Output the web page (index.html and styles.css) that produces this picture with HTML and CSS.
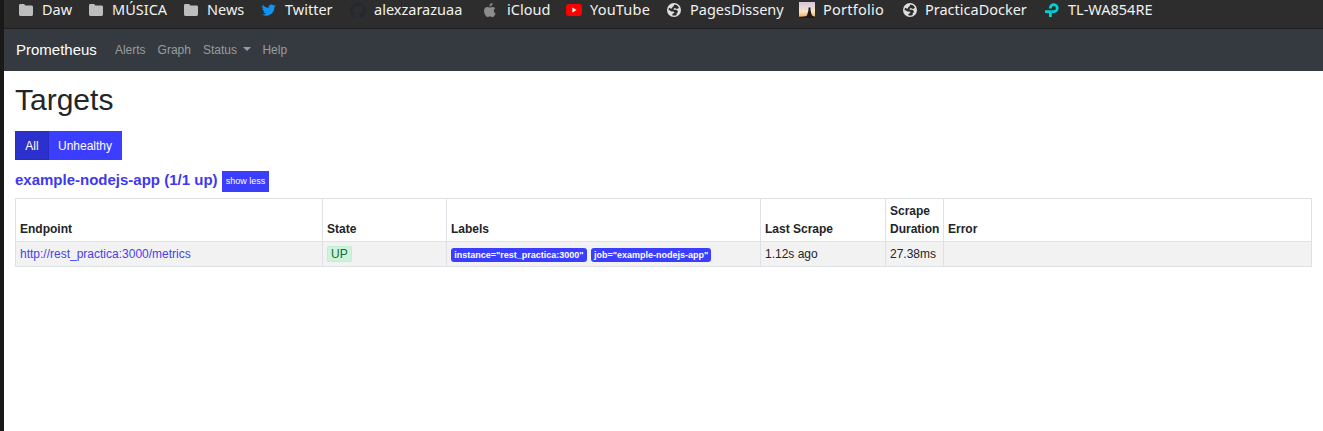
FILE: index.html
```html
<!DOCTYPE html>
<html lang="en">
<head>
<meta charset="utf-8">
<title>Prometheus Targets</title>
<link rel="stylesheet" href="styles.css">
</head>
<body>
<svg width="0" height="0" class="defs">
  <symbol id="folder" viewBox="0 0 14 12"><path fill="#bdbdbd" d="M1.4 0H5l1.5 1.6h6.1Q14 1.6 14 3v7.600Q14 12 12.600 12H1.400Q0 12 0 10.600V1.400Q0 0 1.400 0z"/></symbol>
  <symbol id="globe" viewBox="0 0 14 14"><circle cx="7" cy="7" r="7" fill="#dedede"/><path fill="#2d2d2d" d="M7.200 1.500Q10.500 1.700 12 4.500L10.800 5.700H9L8.200 4.900 6.700 5.500v1.200h2.700l1.400 1.400v1.200L9.600 10.500v1.400Q7.600 13 5.300 12.300V11.200L7.500 9.500 6.500 8.600H4.200L2.800 7.200H1.500Q1.500 5.700 2.100 4.700L3.400 5.500H4.800L5.500 3.900 6.800 3z"/></symbol>
</svg>
<div class="window">
  <nav class="bookmarks">
    <span class="bookmark"><svg class="icon folder"><use href="#folder"/></svg><span class="name">Daw</span></span>
    <span class="bookmark"><svg class="icon folder"><use href="#folder"/></svg><span class="name">MÚSICA</span></span>
    <span class="bookmark"><svg class="icon folder"><use href="#folder"/></svg><span class="name">News</span></span>
    <span class="bookmark"><svg class="icon" viewBox="0 0 24 24"><path fill="#1293f2" d="M23.600 4.900a10 10 0 0 1-2.800.8 4.900 4.900 0 0 0 2.100-2.700 10 10 0 0 1-3.100 1.200 4.900 4.900 0 0 0-8.400 4.500A14 14 0 0 1 1.300 3.500a4.900 4.900 0 0 0 1.500 6.600 5 5 0 0 1-2.200-.6 4.900 4.900 0 0 0 3.900 4.800 5 5 0 0 1-2.200.1 4.900 4.900 0 0 0 4.600 3.400A10 10 0 0 1 0 19.800a14 14 0 0 0 21.200-12.400 10 10 0 0 0 2.400-2.500z"/></svg><span class="name">Twitter</span></span>
    <span class="bookmark"><svg class="icon wide" viewBox="0 0 24 24"><path fill="#24292f" d="M12 .5a12 12 0 0 0-3.800 23.300c.6.100.8-.3.800-.6v-2.100c-3.300.7-4-1.500-4-1.500-.6-1.400-1.400-1.800-1.400-1.800-1-.7.100-.7.100-.7 1.200.1 1.900 1.200 1.900 1.200 1 1.900 2.800 1.300 3.500 1 .1-.8.400-1.300.8-1.600-2.700-.3-5.500-1.300-5.500-6 0-1.200.5-2.300 1.300-3.100-.2-.4-.6-1.600 0-3.200 0 0 1-.3 3.400 1.200a11 11 0 0 1 6 0C17.400 5 18.400 5.300 18.400 5.300c.6 1.600.2 2.900.1 3.200.8.800 1.200 1.900 1.200 3.200 0 4.600-2.800 5.600-5.500 5.900.5.400.9 1.100.9 2.300v3.300c0 .3.100.7.800.6A12 12 0 0 0 12 .5z"/></svg><span class="name">alexzarazuaa</span></span>
    <span class="bookmark"><svg class="icon apple" viewBox="0 0 24 28"><path fill="#8c8c8c" d="M17 0q.3 3-1.700 5T11 6.800q-.2-2.500 1.600-4.600T17 0zM22.500 10.500q-3 1.700-3 5 0 4 3.700 5.500-1 2.700-2.600 4.800T17 28q-1.300 0-2.600-.7t-2.600-.6q-1.200 0-2.500.6t-2.200.7q-2.300 0-4.700-4T0 15.700q0-3.500 1.900-5.700T6.500 7.800q1.500 0 3 .7t2.300.7q.9 0 2.700-.8t3.500-.6q3 .2 4.500 2.700z"/></svg><span class="name">iCloud</span></span>
    <span class="bookmark"><svg class="icon tube" viewBox="0 0 16 12"><rect width="16" height="12" rx="3" fill="#f00"/><path d="M6.400 3.600v4.800L10.500 6z" fill="#fff"/></svg><span class="name youtube">YouTube</span></span>
    <span class="bookmark"><svg class="icon"><use href="#globe"/></svg><span class="name">PagesDisseny</span></span>
    <span class="bookmark"><svg class="icon wide" viewBox="0 0 16 16"><defs><linearGradient id="sunset" x2="0" y2="1"><stop stop-color="#d6c6dc"/><stop offset=".6" stop-color="#f8e4cb"/><stop offset=".85" stop-color="#f3bd70"/><stop offset="1" stop-color="#442018"/></linearGradient></defs><path fill="url(#sunset)" d="M0 0h16v16H0z"/><path fill="#24181c" d="M0 15.200l6-.7 2-1 .7-2.500.8-3V5.500h2V8l.7 3 .8 2.500 2 1 1 .5v1H0z"/></svg><span class="name portfolio">Portfolio</span></span>
    <span class="bookmark"><svg class="icon"><use href="#globe"/></svg><span class="name docker">PracticaDocker</span></span>
    <span class="bookmark"><svg class="icon" viewBox="0 0 14 14"><path fill="none" stroke="#00d2d3" stroke-width="2.800" d="M5.300 5.600V5a3.500 3.500 0 1 1 3.700 3.700H7M0 8.700h4.200M5.400 7.300V14"/></svg><span class="name">TL-WA854RE</span></span>
  </nav>
  <header class="navbar">
    <span class="brand">Prometheus</span>
    <span class="link">Alerts</span>
    <span class="link">Graph</span>
    <span class="link status">Status</span>
    <span class="link">Help</span>
  </header>
  <main class="content">
    <h1 class="title">Targets</h1>
    <div class="filters"><button class="filter active">All</button><button class="filter">Unhealthy</button></div>
    <div class="pool"><h2 class="pool-name">example-nodejs-app (1/1 up)</h2><button class="toggle">show less</button></div>
    <table class="targets">
      <colgroup><col class="c-endpoint"><col class="c-state"><col class="c-labels"><col class="c-last"><col class="c-duration"><col></colgroup>
      <thead><tr><th>Endpoint</th><th>State</th><th>Labels</th><th>Last Scrape</th><th>Scrape Duration</th><th>Error</th></tr></thead>
      <tbody><tr>
        <td><a class="endpoint">http://rest_practica:3000/metrics</a></td>
        <td><span class="up">UP</span></td>
        <td><div class="labels"><span class="label">instance="rest_practica:3000"</span><span class="label">job="example-nodejs-app"</span></div></td>
        <td>1.12s ago</td><td>27.38ms</td><td></td>
      </tr></tbody>
    </table>
  </main>
</div>
</body>
</html>
```
FILE: styles.css
```css
* { box-sizing: border-box; }
body { margin: 0; height: 431px; overflow: hidden; background: #fff; color: #212529; font: 12px/18px "Liberation Sans", Arial, sans-serif; }
.defs { display: block; }
.window { height: 431px; border-left: 4px solid #1a1917; }
.bookmarks { display: grid; grid-template-columns: 70px 95px 78px 89px 133px 83px 100px 133px 103px 142px 120px; height: 29px; padding-left: 15px; background: #2d2d2d; border-bottom: 1px solid #1f1f1f; }
.bookmark { display: flex; align-items: center; height: 20px; color: #f1f1f1; font: 14.500px/20px "Noto Sans", sans-serif; white-space: nowrap; }
.name { padding-bottom: 2px; }
.youtube { letter-spacing: .2px; }
.portfolio { letter-spacing: .25px; }
.docker { margin-left: -1px; }
.icon { flex: none; width: 14px; height: 14px; margin-right: 9px; }
.folder { height: 12px; }
.wide { width: 16px; height: 16px; margin: 0 8px 0 -1px; }
.tube { width: 16px; height: 12px; margin: 0 8px 0 -1px; }
.apple { width: 12px; height: 14px; margin: 0 11px 0 0; }
.navbar { display: flex; align-items: center; height: 42px; padding-left: 12px; background: #343a40; color: #999c9f; }
.brand { margin-right: 18px; color: #fff; font-size: 15px; }
.link { margin-right: 12px; }
.status { margin-right: 11.500px; }
.status::after { content: ""; display: inline-block; margin-left: 6px; vertical-align: 3px; border: 4px solid transparent; border-top-color: currentColor; border-bottom: 0; }
.content { padding: 11px 11px 0; }
.title { margin: 0; font-size: 30px; line-height: 36px; font-weight: 400; }
.filters { display: flex; margin-top: 13px; }
.filter { height: 29px; padding: 0 10px 0 9px; border: 0; background: #3b3eff; color: #fff; font: 12px/18px "Liberation Sans", Arial, sans-serif; }
.active { width: 34px; padding: 0; background: #2c30cc; border: 1px solid #292dbd; }
.pool { display: flex; align-items: flex-start; gap: 4px; height: 21px; margin-top: 11px; }
.pool-name { margin: 0; color: #4038ee; font-size: 15px; line-height: 18px; }
.toggle { width: 47px; height: 21px; padding: 0 0 2px 1px; border: 0; background: #3b3eff; color: #fff; font: 9px/14px "Liberation Sans", Arial, sans-serif; }
.targets { width: 1297px; margin-top: 6px; table-layout: fixed; border-collapse: collapse; }
.c-endpoint { width: 307px; }
.c-state { width: 124px; }
.c-labels { width: 314px; }
.c-last { width: 125px; }
.c-duration { width: 58px; }
th, td { padding: 3px 4px; border: 1px solid #dee2e6; text-align: left; }
th { height: 43px; vertical-align: bottom; }
td { height: 25px; background: #f2f2f2; }
.endpoint { color: #4a3df0; }
.up { display: block; width: 25px; height: 16px; padding: 0 3px; border: 1px solid #bdf0d1; border-radius: 2px; background: #cdf3db; color: #136d37; line-height: 14px; }
.labels { display: flex; gap: 4px; padding-top: 1px; }
.label { height: 14px; padding: 0 3.200px; border-radius: 3px; background: #3b3eff; color: #fff; font-size: 9px; line-height: 14px; font-weight: 700; white-space: nowrap; }
```
